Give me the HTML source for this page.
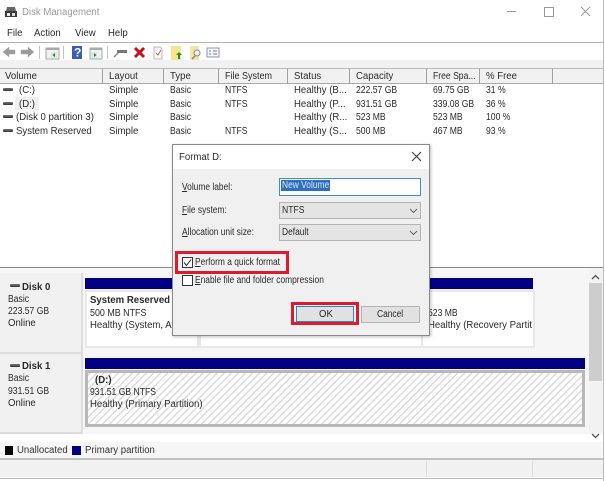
<!DOCTYPE html>
<html><head><meta charset="utf-8"><style>
html,body{margin:0;padding:0;background:#fff}
#p{position:relative;width:605px;height:481px;overflow:hidden;background:#fff;font-family:"Liberation Sans",sans-serif;font-size:10px;color:#2a2a2a;filter:blur(.35px)}
.a,.t{position:absolute}
.t{white-space:nowrap;line-height:12px;font-size:10px;transform:scaleX(.96);transform-origin:0 50%}
.t.n{transform:scaleX(.86)}
.t.h{transform:scaleX(.9)}
.t.d{transform:scaleX(.84)}
.hd{position:absolute;top:68px;height:14px;background:#f1f1f1;border-right:1px solid #a0a0a0;border-top:1px solid #bbb;border-bottom:1px solid #aaa;box-sizing:content-box}
.drv{position:absolute;width:10px;height:3px;background:linear-gradient(#777,#333);border-radius:1px}
u{text-decoration:underline}
.dd{position:absolute;left:279px;width:142px;box-sizing:border-box;background:#e4e4e4;border:1px solid #b4b4b4}
</style></head><body><div id="p">

<!-- title bar -->
<svg class="a" style="left:4px;top:6px" width="14" height="13" viewBox="0 0 14 13"><path d="M3 1h8l1 4H2z" fill="#666"/><rect x="1" y="5" width="12" height="6" fill="#3a3a3a"/><rect x="3" y="7" width="3" height="3" fill="#eee"/><rect x="8" y="7" width="3" height="3" fill="#ddd"/></svg>
<div class="t" style="left:22px;top:7px;color:#9a9a9a">Disk Management</div>
<div class="a" style="left:507px;top:11px;width:9px;height:1px;background:#999"></div>
<div class="a" style="left:544px;top:7px;width:8px;height:8px;border:1px solid #999"></div>
<svg class="a" style="left:580px;top:6px" width="11" height="11"><path d="M1 1L10 10M10 1L1 10" stroke="#999" stroke-width="1" fill="none"/></svg>
<div class="a" style="left:603px;top:0;width:1px;height:481px;background:#bbb"></div>

<!-- menu -->
<div class="t" style="left:7px;top:28px">File</div>
<div class="t" style="left:34px;top:28px">Action</div>
<div class="t" style="left:75px;top:28px">View</div>
<div class="t" style="left:108px;top:28px">Help</div>
<div class="a" style="left:0;top:42px;width:603px;height:1px;background:#b4b4b4"></div>

<!-- toolbar -->
<svg class="a" style="left:0;top:43px" width="225" height="18" viewBox="0 0 225 18">
<path d="M3 9L9 4V7H15V11H9V14Z" fill="#9a9a9a" stroke="#aaa" stroke-width=".5"/>
<path d="M34 9L28 4V7H21V11H28V14Z" fill="#9a9a9a" stroke="#aaa" stroke-width=".5"/>
<rect x="39" y="3" width="1" height="13" fill="#c4c4c4"/>
<rect x="46" y="5" width="13" height="11" fill="#eef2f2" stroke="#aaa"/><rect x="46" y="5" width="13" height="2" fill="#aaa"/><rect x="51" y="9" width="6" height="6" fill="#d9ecd9"/><path d="M55 10l-2.500 2 2.500 2z" fill="#2c7a3a"/>
<rect x="63" y="3" width="1" height="13" fill="#c4c4c4"/>
<rect x="72" y="3" width="10" height="13" fill="#3a5cb8"/><text x="74" y="13.500" font-size="12" font-weight="bold" fill="#fff" font-family="Liberation Sans">?</text>
<rect x="90" y="5" width="12" height="11" fill="#eef2f2" stroke="#aaa"/><rect x="90" y="5" width="12" height="2" fill="#aaa"/><rect x="91" y="9" width="6" height="6" fill="#d9ecd9"/><path d="M94 10l2.500 2-2.500 2z" fill="#2c7a3a"/>
<rect x="107" y="3" width="1" height="13" fill="#c4c4c4"/>
<path d="M117 7h10v3h-10z" fill="#777"/><path d="M114 14l4-4" stroke="#888" stroke-width="1.500"/>
<path d="M135 5L144 14M144 5L135 14" stroke="#c4121a" stroke-width="3" fill="none"/>
<path d="M154 4h6l2 2v10h-8z" fill="#fafafa" stroke="#bbb"/><path d="M156 10l2 2 3-5" stroke="#d06050" stroke-width="1" fill="none"/>
<rect x="171" y="3" width="10" height="14" fill="#f6e58c"/><path d="M178 16v-4h-2l3-3 3 3h-2v4z" fill="#2b8a2b"/>
<rect x="190" y="3" width="9" height="14" fill="#f6e5a0"/><circle cx="197" cy="10" r="3" fill="#eef" stroke="#888"/><path d="M195 13l-3 3" stroke="#888" stroke-width="1.500"/>
<rect x="207" y="5" width="12" height="9" fill="#f4f8fa" stroke="#8a98a6"/><path d="M209 8h2M209 11h2M213 8h4M213 11h4" stroke="#778" stroke-width="1"/>
</svg>
<div class="a" style="left:0;top:60px;width:603px;height:8px;background:#f1f1f1"></div>

<!-- list header -->
<div class="hd" style="left:0;width:102px"></div>
<div class="hd" style="left:103px;width:60px"></div>
<div class="hd" style="left:164px;width:54px"></div>
<div class="hd" style="left:219px;width:68px"></div>
<div class="hd" style="left:288px;width:61px"></div>
<div class="hd" style="left:350px;width:76px"></div>
<div class="hd" style="left:427px;width:52px"></div>
<div class="hd" style="left:480px;width:72px"></div>
<div class="hd" style="left:553px;width:50px;border-right:0"></div>
<div class="t" style="left:5px;top:71px">Volume</div>
<div class="t" style="left:109px;top:71px">Layout</div>
<div class="t" style="left:170px;top:71px">Type</div>
<div class="t h" style="left:225px;top:71px">File System</div>
<div class="t" style="left:294px;top:71px">Status</div>
<div class="t" style="left:356px;top:71px">Capacity</div>
<div class="t n" style="left:433px;top:71px">Free Spa...</div>
<div class="t" style="left:486px;top:71px">% Free</div>

<!-- rows -->
<div class="drv" style="left:3px;top:88px"></div>
<div class="t" style="left:19px;top:85px">(C:)</div>
<div class="t" style="left:109px;top:85px">Simple</div><div class="t n" style="left:170px;top:85px">Basic</div><div class="t n" style="left:225px;top:85px">NTFS</div><div class="t" style="left:294px;top:85px">Healthy (B...</div><div class="t n" style="left:356px;top:85px">222.57 GB</div><div class="t n" style="left:433px;top:85px">69.75 GB</div><div class="t n" style="left:486px;top:85px">31 %</div>

<div class="a" style="left:15px;top:97px;width:24px;height:13px;background:#f0f0f0"></div>
<div class="drv" style="left:3px;top:102px"></div>
<div class="t" style="left:19px;top:99px">(D:)</div>
<div class="t" style="left:109px;top:99px">Simple</div><div class="t n" style="left:170px;top:99px">Basic</div><div class="t n" style="left:225px;top:99px">NTFS</div><div class="t" style="left:294px;top:99px">Healthy (P...</div><div class="t n" style="left:356px;top:99px">931.51 GB</div><div class="t n" style="left:433px;top:99px">339.08 GB</div><div class="t n" style="left:486px;top:99px">36 %</div>

<div class="drv" style="left:3px;top:115px"></div>
<div class="t" style="left:16px;top:112px">(Disk 0 partition 3)</div>
<div class="t" style="left:109px;top:112px">Simple</div><div class="t n" style="left:170px;top:112px">Basic</div><div class="t" style="left:294px;top:112px">Healthy (R...</div><div class="t n" style="left:356px;top:112px">523 MB</div><div class="t n" style="left:433px;top:112px">523 MB</div><div class="t n" style="left:486px;top:112px">100 %</div>

<div class="drv" style="left:3px;top:129px"></div>
<div class="t" style="left:16px;top:126px">System Reserved</div>
<div class="t" style="left:109px;top:126px">Simple</div><div class="t n" style="left:170px;top:126px">Basic</div><div class="t n" style="left:225px;top:126px">NTFS</div><div class="t" style="left:294px;top:126px">Healthy (S...</div><div class="t n" style="left:356px;top:126px">500 MB</div><div class="t n" style="left:433px;top:126px">467 MB</div><div class="t n" style="left:486px;top:126px">93 %</div>

<!-- bottom pane -->
<div class="a" style="left:0;top:267px;width:603px;height:1px;background:#888"></div>
<div class="a" style="left:0;top:268px;width:603px;height:166px;background:#f6f6f6"></div>

<div class="a" style="left:0;top:273px;width:81px;height:79px;background:#f1f1f1;border-right:2px solid #ddd;border-bottom:2px solid #ddd"></div>
<div class="a" style="left:0;top:354px;width:81px;height:78px;background:#f1f1f1;border-right:2px solid #ddd;border-bottom:2px solid #ddd"></div>
<div class="drv" style="left:10px;top:284px"></div>
<div class="t" style="left:22px;top:282px;font-weight:bold">Disk 0</div>
<div class="t n" style="left:8px;top:294px">Basic</div><div class="t n" style="left:8px;top:306px">223.57 GB</div><div class="t" style="left:8px;top:318px">Online</div>
<div class="drv" style="left:10px;top:364px"></div>
<div class="t" style="left:22px;top:361px;font-weight:bold">Disk 1</div>
<div class="t n" style="left:8px;top:373px">Basic</div><div class="t n" style="left:8px;top:386px">931.51 GB</div><div class="t" style="left:8px;top:398px">Online</div>

<!-- disk 0 -->
<div class="a" style="left:85px;top:278px;width:448px;height:11px;background:#000080"></div>
<div class="a" style="left:85px;top:290px;width:110px;height:54px;background:#fff;border:2px solid #e8e8e8"></div>
<div class="a" style="left:199px;top:290px;width:220px;height:54px;background:#fff;border:2px solid #e8e8e8"></div>
<div class="a" style="left:421px;top:290px;width:110px;height:54px;background:#fff;border:2px solid #e8e8e8"></div>
<div class="t" style="left:90px;top:295px;font-weight:bold">System Reserved</div>
<div class="t n" style="left:90px;top:308px;transform:scaleX(.89)">500 MB NTFS</div>
<div class="t" style="left:90px;top:320px">Healthy (System, Ac</div>
<div class="t n" style="left:428px;top:308px">523 MB</div>
<div class="t" style="left:428px;top:320px">Healthy (Recovery Partit</div>

<!-- disk 1 -->
<div class="a" style="left:85px;top:358px;width:500px;height:11px;background:#000080"></div>
<svg class="a" style="left:85px;top:370px" width="500" height="57">
<defs><pattern id="h" width="5" height="5" patternUnits="userSpaceOnUse" patternTransform="rotate(45)"><rect width="5" height="5" fill="#fff"/><rect width="1.200" height="5" fill="#d4d4d4"/></pattern></defs>
<rect x="1.500" y="1.500" width="497" height="54" fill="url(#h)" stroke="#b8b8b8" stroke-width="3"/></svg>
<div class="t" style="left:95px;top:375px;font-weight:bold">(D:)</div>
<div class="t n" style="left:90px;top:387px">931.51 GB NTFS</div>
<div class="t" style="left:90px;top:399px">Healthy (Primary Partition)</div>

<!-- scrollbar -->
<div class="a" style="left:589px;top:268px;width:14px;height:166px;background:#f2f2f2"></div>
<div class="a" style="left:589px;top:283px;width:13px;height:98px;background:#cdcdcd"></div>
<svg class="a" style="left:591px;top:274px" width="9" height="6"><path d="M1 5L4.500 1.500L8 5" stroke="#555" stroke-width="1.300" fill="none"/></svg>
<svg class="a" style="left:591px;top:433px" width="9" height="6"><path d="M1 1L4.500 4.500L8 1" stroke="#555" stroke-width="1.300" fill="none"/></svg>

<!-- legend -->
<div class="a" style="left:0;top:442px;width:603px;height:17px;background:#f6f6f6"></div>
<div class="a" style="left:5px;top:446px;width:8px;height:9px;background:#000"></div>
<div class="t" style="left:17px;top:445px;color:#333">Unallocated</div>
<div class="a" style="left:72px;top:446px;width:9px;height:9px;background:#000080"></div>
<div class="t" style="left:85px;top:445px;color:#333">Primary partition</div>
<div class="a" style="left:0;top:458px;width:603px;height:2px;background:#c0c0c0"></div>
<div class="a" style="left:0;top:460px;width:603px;height:17px;background:#f1f1f1"></div>
<div class="a" style="left:426px;top:461px;width:1px;height:16px;background:#ddd"></div>
<div class="a" style="left:532px;top:461px;width:1px;height:16px;background:#ddd"></div>
<div class="a" style="left:0;top:478px;width:603px;height:1px;background:#bbb"></div>

<!-- dialog -->
<div class="a" style="left:172px;top:144px;width:256px;height:190px;background:#f0f0f0;border:1px solid #8a8a8a;box-shadow:1px 1px 3px rgba(0,0,0,.25)"></div>
<div class="a" style="left:173px;top:145px;width:256px;height:24px;background:#fff"></div>
<div class="t" style="left:179px;top:152px">Format D:</div>
<svg class="a" style="left:411px;top:151px" width="11" height="11"><path d="M1 1L10 10M10 1L1 10" stroke="#333" stroke-width="1" fill="none"/></svg>

<div class="t d" style="left:182px;top:182px"><u>V</u>olume label:</div>
<div class="a" style="left:279px;top:178px;width:142px;height:18px;box-sizing:border-box;background:#fff;border:1px solid #3f8fc4"></div>
<div class="a" style="left:281px;top:180px;width:49px;height:11px;background:#2f6fc0"></div>
<div class="t d" style="left:282px;top:180px;color:#dfe9f7">New Volume</div>

<div class="t d" style="left:182px;top:205px"><u>F</u>ile system:</div>
<div class="dd" style="top:202px;height:17px"></div>
<div class="t n" style="left:282px;top:205px">NTFS</div>
<svg class="a" style="left:409px;top:208px" width="9" height="6"><path d="M1 1L4.500 4.500L8 1" stroke="#666" stroke-width="1" fill="none"/></svg>

<div class="t d" style="left:182px;top:227px"><u>A</u>llocation unit size:</div>
<div class="dd" style="top:224px;height:17px"></div>
<div class="t d" style="left:282px;top:227px">Default</div>
<svg class="a" style="left:409px;top:230px" width="9" height="6"><path d="M1 1L4.500 4.500L8 1" stroke="#666" stroke-width="1" fill="none"/></svg>

<div class="a" style="left:175px;top:251px;width:114px;height:23px;box-sizing:border-box;border:3px solid #dc1c2e"></div>
<div class="a" style="left:182px;top:257px;width:11px;height:11px;box-sizing:border-box;background:#fff;border:1px solid #333"></div>
<svg class="a" style="left:182px;top:257px" width="11" height="11"><path d="M2 5.500L4.500 8.500L9 2.500" stroke="#222" stroke-width="1" fill="none"/></svg>
<div class="t d" style="left:195px;top:257px"><u>P</u>erform a quick format</div>
<div class="a" style="left:182px;top:275px;width:11px;height:11px;box-sizing:border-box;background:#fff;border:1px solid #333"></div>
<div class="t d" style="left:195px;top:275px"><u>E</u>nable file and folder compression</div>

<div class="a" style="left:291px;top:302px;width:68px;height:23px;box-sizing:border-box;border:3px solid #dc1c2e"></div>
<div class="a" style="left:296px;top:306px;width:58px;height:16px;box-sizing:border-box;background:#e1e1e1;border:1px solid #2f86c4"></div>
<div class="t" style="left:319px;top:309px">OK</div>
<div class="a" style="left:361px;top:306px;width:59px;height:17px;box-sizing:border-box;background:#e1e1e1;border:1px solid #b4b4b4"></div>
<div class="t d" style="left:377px;top:309px">Cancel</div>

</div></body></html>
